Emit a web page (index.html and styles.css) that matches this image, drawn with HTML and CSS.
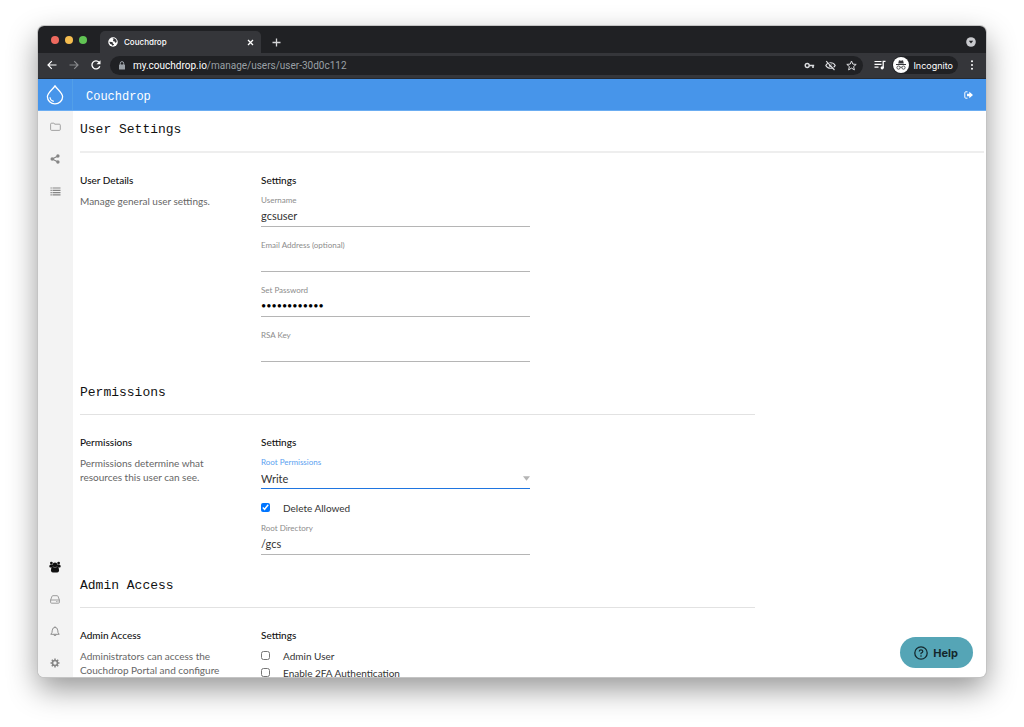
FILE: index.html
```html
<!DOCTYPE html>
<html lang="en">
<head>
<meta charset="utf-8">
<meta name="viewport" content="width=device-width, initial-scale=1">
<title>Couchdrop</title>
<link rel="stylesheet" href="styles.css">
</head>
<body>
<div class="window">
  <div class="tabstrip">
    <div class="lights"><span class="light red"></span><span class="light yellow"></span><span class="light green"></span></div>
    <div class="tab">
      <svg class="globe" viewBox="0 0 20 20" aria-hidden="true"><circle cx="10" cy="10" r="9.5" fill="#fff"/><path d="M2.500 9.500l5.500.3 2 1.700-.5 2 2.500.5-.5 2-3 1.500-1.500-3-2.500-.5zM9 2.800l3.500-.3 3.500 2.500 1.500 3.500-1.500 3-2-.5-.5-2-3-.5-.5-2.500 1.500-.8z" fill="#35363a"/></svg>
      <span class="tab-title">Couchdrop</span>
      <button class="icon-btn" type="button" aria-label="Close tab"><svg width="7" height="7" viewBox="0 0 7 7"><path d="M1 1l5 5M6 1L1 6" stroke="#fff" stroke-width="1.300"/></svg></button>
    </div>
    <button class="icon-btn new-tab" type="button" aria-label="New tab"><svg width="9" height="9" viewBox="0 0 9 9"><path d="M4.500 .5v8M.5 4.500h8" stroke="#d5d6d8" stroke-width="1.300"/></svg></button>
    <button class="icon-btn tab-search" type="button" aria-label="Search tabs"><svg width="10" height="10" viewBox="0 0 10 10"><circle cx="5" cy="5" r="4.800" fill="#c9cace"/><path d="M2.800 3.800h4.400L5 6.600z" fill="#202124"/></svg></button>
  </div>
  <div class="toolbar">
    <button class="icon-btn" type="button" aria-label="Back"><svg width="10" height="10" viewBox="0 0 10 10"><path d="M9.500 5H1M4.800 1.200L1 5l3.800 3.800" fill="none" stroke="#fff" stroke-width="1.200"/></svg></button>
    <button class="icon-btn" type="button" aria-label="Forward"><svg width="10" height="10" viewBox="0 0 10 10"><path d="M.5 5H9M5.200 1.200L9 5 5.200 8.800" fill="none" stroke="#88898c" stroke-width="1.200"/></svg></button>
    <button class="icon-btn" type="button" aria-label="Reload"><svg width="10" height="10" viewBox="0 0 10 10"><path d="M8.800 6.200A4 4 0 1 1 8 2.300" fill="none" stroke="#fff" stroke-width="1.300"/><path d="M9.500 .3v4h-4z" fill="#fff"/></svg></button>
    <div class="address">
      <svg width="6" height="9" viewBox="0 0 6 9" aria-hidden="true"><rect y="3.500" width="6" height="5" rx=".6" fill="#9aa0a6"/><path d="M1.300 4V2.300a1.700 1.700 0 0 1 3.400 0V4" fill="none" stroke="#9aa0a6"/></svg>
      <a class="url" href="#"><span class="host">my.couchdrop.io</span>/manage/users/user-30d0c112</a>
      <button class="icon-btn" type="button" aria-label="Passwords"><svg width="11" height="11" viewBox="0 0 11 11"><circle cx="3.200" cy="5.500" r="2" fill="none" stroke="#dcdde0" stroke-width="1.400"/><path d="M5.200 5.500h5M9 5.500v2.400" stroke="#dcdde0" stroke-width="1.600" fill="none"/></svg></button>
      <button class="icon-btn" type="button" aria-label="Tracking"><svg width="11" height="11" viewBox="0 0 11 11"><path d="M.8 5.500C2.500 1.800 8.500 1.800 10.200 5.500 8.500 9.200 2.500 9.200.8 5.500z" fill="none" stroke="#dcdde0" stroke-width="1.100"/><circle cx="5.500" cy="5.500" r="1.600" fill="#dcdde0"/><path d="M2 .8l8 8.900" stroke="#202124" stroke-width="1.200"/><path d="M1.200 1.200l8.300 8.800" stroke="#dcdde0" stroke-width="1.100"/></svg></button>
      <button class="icon-btn" type="button" aria-label="Bookmark"><svg width="11" height="11" viewBox="0 0 11 11"><path d="M5.500 1l1.300 3.100 3.400.3-2.600 2.200.8 3.300-2.900-1.800-2.900 1.800.8-3.300L.8 4.400l3.400-.3z" fill="none" stroke="#dcdde0"/></svg></button>
    </div>
    <button class="icon-btn" type="button" aria-label="Media"><svg width="12" height="10" viewBox="0 0 12 10"><path d="M.5 1.500h7M.5 4.300h7M.5 7.100h4" stroke="#fff" stroke-width="1.200"/><path d="M9.200 8V1.300h2.300" fill="none" stroke="#fff" stroke-width="1.300"/><circle cx="8.200" cy="7.800" r="1.600" fill="#fff"/></svg></button>
    <button class="profile" type="button"><svg width="16" height="16" viewBox="0 0 16 16" aria-hidden="true"><circle cx="8" cy="8" r="8" fill="#fff"/><path d="M5.200 6.500l.8-3.300 2 .5 2-.5.8 3.300zM3 7h10v1H3z" fill="#35363a"/><path d="M7.100 10.300q.9-.6 1.800 0" fill="none" stroke="#35363a" stroke-width=".8"/><circle cx="5.500" cy="10.600" r="1.600" fill="none" stroke="#35363a" stroke-width=".8"/><circle cx="10.500" cy="10.600" r="1.600" fill="none" stroke="#35363a" stroke-width=".8"/></svg>Incognito</button>
    <button class="icon-btn" type="button" aria-label="Menu"><svg width="4" height="10" viewBox="0 0 4 10"><g fill="#fff"><circle cx="2" cy="1.200" r="1"/><circle cx="2" cy="5" r="1"/><circle cx="2" cy="8.800" r="1"/></g></svg></button>
  </div>

  <header class="app-header">
    <a class="logo" href="#" aria-label="Home"><svg width="18" height="20" viewBox="0 0 18 20"><path d="M9 .8C6.800 4.500 1.400 7.600 1.400 11.800a7.600 7 0 0 0 15.200 0C16.600 7.600 11.200 4.500 9 .8z" fill="none" stroke="#fff" stroke-width="1.300"/><path d="M4 12.200c.2 2.200 1.700 3.700 3.800 4.100" fill="none" stroke="#fff" stroke-width="1.200"/></svg></a>
    <span class="brand">Couchdrop</span>
    <button class="icon-btn logout" type="button" aria-label="Log out"><svg width="10" height="8" viewBox="0 0 10 8"><path d="M3.500.8H1.800Q.8.800.8 1.800v4.400q0 1 1 1h1.700" fill="none" stroke="#fff"/><path d="M3 2.700h2.300V.7L9 4 5.300 7.300v-2H3z" fill="#fff"/></svg></button>
  </header>

  <div class="body">
    <nav class="sidebar" aria-label="Main">
      <a href="#" aria-label="Files"><svg width="11" height="10" viewBox="0 0 11 10"><path d="M.6 2.200q0-1 1-1h2.100q.8 0 .9 1h4.700q1 0 1 1v4.200q0 1-1 1H1.600q-1 0-1-1z" fill="none" stroke="#989898" stroke-width=".9"/></svg></a>
      <a href="#" aria-label="Shares"><svg width="10" height="10" viewBox="0 0 10 10"><path d="M8 2L2.200 5 8 8" fill="none" stroke="#858585" stroke-width="1.200"/><g fill="#858585"><circle cx="7.900" cy="2" r="1.700"/><circle cx="2.200" cy="5" r="1.700"/><circle cx="7.900" cy="8" r="1.700"/></g></svg></a>
      <a href="#" aria-label="Logs"><svg width="11" height="9" viewBox="0 0 11 9"><path d="M.5 1h1.300M2.500 1h8M.5 3.300h1.300M2.500 3.300h8M.5 5.600h1.300M2.500 5.600h8M.5 7.900h1.300M2.500 7.900h8" stroke="#858585" stroke-width="1.200"/></svg></a>
      <span class="spacer"></span>
      <a href="#" aria-label="Users"><svg width="12" height="12" viewBox="0 0 12 12"><g fill="#111"><circle cx="2.400" cy="2.100" r="1.400"/><circle cx="9.600" cy="2.100" r="1.400"/><path d="M.3 5.600q0-2 1.500-2h8.400q1.500 0 1.500 2 0 .9-1 .9H1.300q-1 0-1-.9z"/><circle cx="6" cy="3.900" r="2.300"/><path d="M2 9.200q0-3.400 2-3.400h4q2 0 2 3.400 0 2.300-1.800 2.300H3.800Q2 11.500 2 9.200z"/></g><path d="M3.600 5.700Q6 7.600 8.400 5.700" fill="none" stroke="#bbb" stroke-width=".5"/></svg></a>
      <a href="#" aria-label="Storage"><svg width="10" height="9" viewBox="0 0 10 9"><path d="M.6 5L2 1.300q.2-.6 1-.6h4q.8 0 1 .6L9.400 5v2.300q0 .9-.9.900h-7q-.9 0-.9-.9zM.6 5h8.800M6 6.600h.8M7.500 6.600h.8" fill="none" stroke="#929292" stroke-width=".9"/></svg></a>
      <a href="#" aria-label="Notifications"><svg width="10" height="11" viewBox="0 0 10 11"><path d="M.8 8.300Q2.300 7 2.300 4.200 2.500 1.400 5 1.400t2.700 2.800Q7.700 7 9.200 8.300zM3.900 8.500q0 1.200 1.100 1.200t1.100-1.200M5 .3v1" fill="none" stroke="#858585" stroke-width=".9"/></svg></a>
      <a href="#" aria-label="Preferences"><svg width="10" height="10" viewBox="0 0 10 10"><circle cx="5" cy="5" r="2.500" fill="none" stroke="#858585" stroke-width="1.600"/><path d="M5 .5v1.800M5 7.700v1.800M.5 5h1.800M7.700 5h1.800M1.800 1.800l1.300 1.300M6.900 6.900l1.300 1.300M1.800 8.200l1.300-1.300M6.900 3.100l1.300-1.300" stroke="#858585" stroke-width="1.500"/></svg></a>
    </nav>

    <main class="content">
      <section class="section wide">
        <h1 class="title">User Settings</h1>
        <div class="columns">
          <div class="about"><h2 class="subtitle">User Details</h2><p class="text">Manage general user settings.</p></div>
          <div class="fields">
            <h2 class="subtitle">Settings</h2>
            <div class="field"><label for="username">Username</label><input id="username" type="text" value="gcsuser"></div>
            <div class="field"><label for="email">Email Address (optional)</label><input id="email" type="email"></div>
            <div class="field"><label for="password">Set Password</label><input id="password" class="password" type="password" value="abcdefghijkl"></div>
            <div class="field"><label for="rsa">RSA Key</label><input id="rsa" type="text"></div>
          </div>
        </div>
      </section>
      <section class="section">
        <h1 class="title">Permissions</h1>
        <div class="columns">
          <div class="about"><h2 class="subtitle">Permissions</h2><p class="text">Permissions determine what resources this user can see.</p></div>
          <div class="fields">
            <h2 class="subtitle">Settings</h2>
            <div class="field active"><label for="root-permissions">Root Permissions</label>
              <div class="select"><select id="root-permissions"><option>Write</option><option>Read</option></select><svg width="7" height="5" viewBox="0 0 7 5" aria-hidden="true"><path d="M0 .3h7L3.500 4.800z" fill="#b5b5b5"/></svg></div></div>
            <label class="check spaced"><input type="checkbox" checked>Delete Allowed</label>
            <div class="field"><label for="root-directory">Root Directory</label><input id="root-directory" type="text" value="/gcs"></div>
          </div>
        </div>
      </section>
      <section class="section">
        <h1 class="title">Admin Access</h1>
        <div class="columns">
          <div class="about"><h2 class="subtitle">Admin Access</h2><p class="text">Administrators can access the Couchdrop Portal and configure</p></div>
          <div class="fields">
            <h2 class="subtitle">Settings</h2>
            <label class="check"><input type="checkbox">Admin User</label>
            <label class="check"><input type="checkbox">Enable 2FA Authentication</label>
          </div>
        </div>
      </section>
    </main>
    <button class="help" type="button"><svg width="14" height="14" viewBox="0 0 14 14" aria-hidden="true"><circle cx="7" cy="7" r="6.200" fill="none" stroke="#14282d" stroke-width="1.300"/><path d="M5.200 5.500Q5.300 3.900 7 3.900t1.800 1.500Q8.800 6.400 7 7.200v1" fill="none" stroke="#14282d" stroke-width="1.200"/><circle cx="7" cy="10" r=".8" fill="#14282d"/></svg>Help</button>
  </div>
</div>
</body>
</html>
```
FILE: styles.css
```css
* { box-sizing: border-box; }

body {
  margin: 0;
  height: 100vh;
  padding: 26px 38px 50px;
  display: flex;
  background: #fff;
  color: #333;
  font-family: Lato, "Liberation Sans", sans-serif;
  font-size: 10px;
  overflow: hidden;
}

h1, h2, p { margin: 0; }
svg { display: block; flex: none; }
button, input, select { font: inherit; color: inherit; margin: 0; }
a { color: inherit; text-decoration: none; }

.icon-btn {
  display: flex;
  align-items: center;
  justify-content: center;
  padding: 0;
  border: 0;
  background: none;
}

.window {
  flex: 1;
  min-width: 0;
  display: flex;
  flex-direction: column;
  overflow: hidden;
  border-radius: 6px;
  background: #fff;
  box-shadow: 0 0 0 1px #c4c4c4, 0 12px 30px rgba(0, 0, 0, 0.42);
}

/* Browser frame */
.tabstrip {
  display: flex;
  align-items: center;
  height: 27px;
  flex: none;
  padding: 5px 10px 0 13px;
  background: #202124;
  color: #fff;
  font-family: Inter, sans-serif;
}
.lights { display: flex; gap: 6px; margin: 0 13px 4px 0; }
.light { width: 8px; height: 8px; border-radius: 50%; }
.red { background: #ee6a5f; }
.yellow { background: #f5bd4f; }
.green { background: #61c454; }
.tab {
  display: flex;
  align-items: center;
  align-self: stretch;
  width: 161px;
  padding: 0 7px 0 8px;
  gap: 6px;
  border-radius: 5px 5px 0 0;
  background: #35363a;
}
.globe { width: 10px; height: 10px; }
.tab-title { flex: 1; font-size: 8px; font-weight: 500; line-height: 12px; }
.new-tab { margin-left: 11px; }
.tab-search { margin-left: auto; }

.toolbar {
  display: flex;
  align-items: center;
  gap: 12px;
  height: 26px;
  flex: none;
  padding: 0 12px 1px 9px;
  border-bottom: 1px solid #242a33;
  background: #35363a;
  color: #fff;
  font-family: Inter, sans-serif;
  font-size: 9px;
}
.address {
  flex: 1;
  min-width: 0;
  display: flex;
  align-items: center;
  gap: 10px;
  height: 19px;
  margin: 0 -1px 0 -3px;
  padding: 0 6px 0 9px;
  border-radius: 10px;
  background: #202124;
}
.url { flex: 1; margin-left: -2px; color: #9aa0a6; font-family: Roboto, sans-serif; font-size: 10px; white-space: nowrap; overflow: hidden; }
.host { color: #fff; }
.profile {
  display: flex;
  align-items: center;
  gap: 4px;
  height: 18px;
  margin: 0 0 0 -6px;
  padding: 0 5px 0 1px;
  border: 0;
  border-radius: 9px;
  background: #202124;
}

/* Application */
.app-header {
  display: flex;
  align-items: center;
  height: 32px;
  flex: none;
  padding-right: 12px;
  border-bottom: 1px solid #6badf2;
  background: #4795ea;
  color: #fff;
}
.logo {
  align-self: stretch;
  display: flex;
  align-items: center;
  justify-content: center;
  width: 35px;
  border-right: 1px solid #529fe8;
}
.brand { margin-left: 13px; padding-top: 5px; font-family: "Courier New", "Liberation Mono", monospace; font-size: 12px; line-height: 14px; }
.logout { margin-left: auto; }

.body { position: relative; flex: 1; min-height: 0; display: flex; }
.sidebar {
  width: 35px;
  flex: none;
  display: flex;
  flex-direction: column;
  gap: 4px;
  padding: 2px 1px 0 0;
  background: #f3f3f3;
}
.sidebar a { height: 28px; flex: none; display: flex; align-items: center; justify-content: center; }
.spacer { flex: 1; }

.content { flex: 1; min-width: 0; padding: 0 2px 0 7px; overflow: hidden; }
.section { max-width: 675px; padding-top: 10px; }
.section.wide { max-width: none; }
.title {
  padding-bottom: 12px;
  border-bottom: 1px solid #e2e2e2;
  color: #111;
  font-family: "Courier New", "Liberation Mono", monospace;
  font-size: 13px;
  font-weight: 400;
  line-height: 18px;
}
.wide .title { border-bottom: 2px solid #eee; }
.columns { display: grid; grid-template-columns: 144px minmax(0, 269px); column-gap: 37px; padding-top: 19px; }
.subtitle { margin-bottom: 6px; color: #111; font-size: 10px; font-weight: 500; line-height: 16px; }
.text { color: #666; font-size: 10px; line-height: 14px; }

.field { display: flex; flex-direction: column; margin-bottom: 12px; }
.field label { color: #8c8c8c; font-size: 8px; line-height: 12px; }
.field input, .select {
  width: 100%;
  height: 21px;
  padding: 0 0 2px;
  border: 0;
  border-bottom: 1px solid #b5b5b5;
  border-radius: 0;
  background: none;
  font-size: 11px;
  outline: 0;
}
.field .password { color: #000; font-size: 9px; }
.select { display: flex; align-items: center; padding: 0; }
.select select { flex: 1; height: 20px; padding: 0; border: 0; background: none; appearance: none; outline: 0; }
.active label { color: #5b9ff0; }
.active .select { border-bottom: 1px solid #1f75e0; }
.check { display: flex; align-items: flex-start; gap: 13px; height: 17px; font-size: 10px; line-height: 15px; }
.check input { width: 9px; height: 9px; margin-top: 2px; }
.spaced { margin-bottom: 4px; }

.help {
  position: absolute;
  right: 13px;
  bottom: 9px;
  display: flex;
  align-items: center;
  gap: 5px;
  height: 31px;
  padding: 0 15px 0 14px;
  border: 0;
  border-radius: 16px;
  background: #55a5b6;
  color: #14282d;
  font-family: Inter, sans-serif;
  font-size: 11px;
  font-weight: 700;
}
```
